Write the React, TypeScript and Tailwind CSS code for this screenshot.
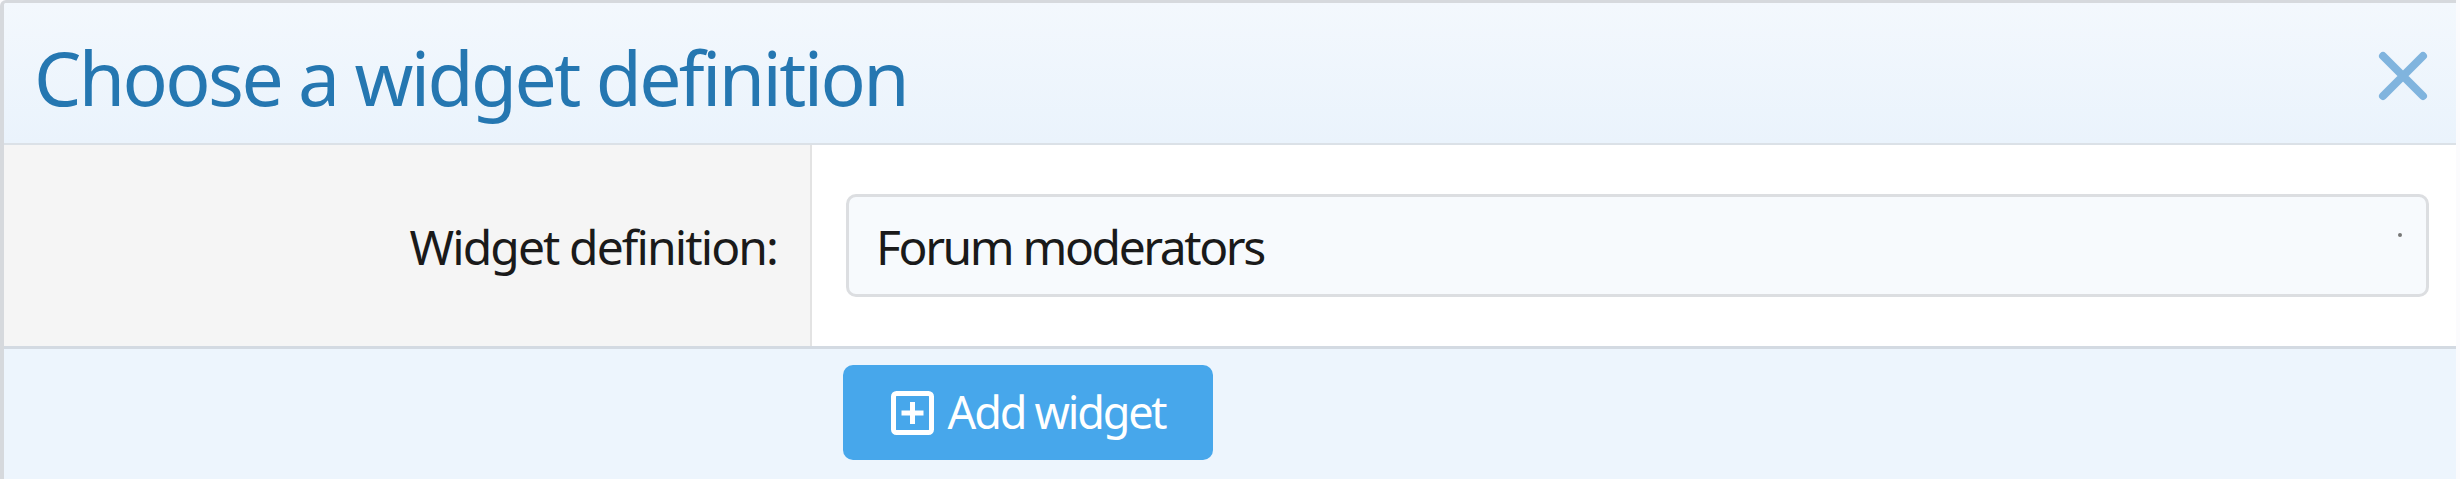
const App = () => {
    return (
        <div className="w-[2460px] h-[479px] bg-[#fbfbfd] overflow-hidden font-['Noto_Sans',sans-serif]">
            <div className="h-full w-[2456px] flex flex-col border-l-4 border-t-[3px] border-[#d6d9dd] rounded-tl-[6px] overflow-hidden">
                {/* HEADER */}
                <div className="h-[142px] flex items-center justify-between bg-gradient-to-b from-[#f3f8fd] to-[#eaf3fc] pl-[30px] pr-[27px] border-b-2 border-[#dbe1e7]">
                    <h1 className="text-[#2577b1] text-[75px] leading-none tracking-[-2.6px] pt-[8px]">
                        Choose a widget definition
                    </h1>
                    <svg width="52" height="50" viewBox="0 0 52 50" className="text-[#80b4de] mt-[6px]">
                        <path d="M6 5 L46 45 M46 5 L6 45" stroke="currentColor" strokeWidth="8" strokeLinecap="round" />
                    </svg>
                </div>

                {/* FORM ROW */}
                <div className="h-[201px] flex">
                    <div className="w-[808px] bg-[#f5f5f5] border-r-2 border-[#e3e3e3] flex items-center justify-end pr-[33px]">
                        <span className="text-[#1a1a1a] text-[48px] tracking-[-1.9px] pt-[3px]">Widget definition:</span>
                    </div>
                    <div className="flex-1 bg-white flex items-center pl-[34px] pr-[27px]">
                        <div className="relative flex-1 h-[103px] rounded-[10px] border-[3px] border-[#dcdee1] bg-[#f7fafd] flex items-center pl-[27px]">
                            <span className="text-[#1a1a1a] text-[48px] tracking-[-2.4px] pt-[3px]">Forum moderators</span>
                            <span className="absolute right-[24px] top-[36px] w-[4px] h-[4px] rounded-full bg-[#777]" />
                        </div>
                    </div>
                </div>

                {/* FOOTER */}
                <div className="flex-1 bg-[#edf5fd] border-t-[3px] border-[#d3dae2] pl-[839px] pt-[16px]">
                    <button className="w-[370px] h-[95px] rounded-[10px] bg-[#47a7eb] flex items-center justify-center gap-[14px] text-white">
                        <svg width="43" height="44" viewBox="0 0 43 44">
                            <rect x="2.5" y="2.5" width="38" height="39" rx="3" fill="none" stroke="white" strokeWidth="5" />
                            <path d="M21.5 11 V33 M10.5 22 H32.5" stroke="white" strokeWidth="5" />
                        </svg>
                        <span className="text-[45px] tracking-[-2.2px] pb-[2px]">Add widget</span>
                    </button>
                </div>
            </div>
        </div>
    );
};

export default App;
